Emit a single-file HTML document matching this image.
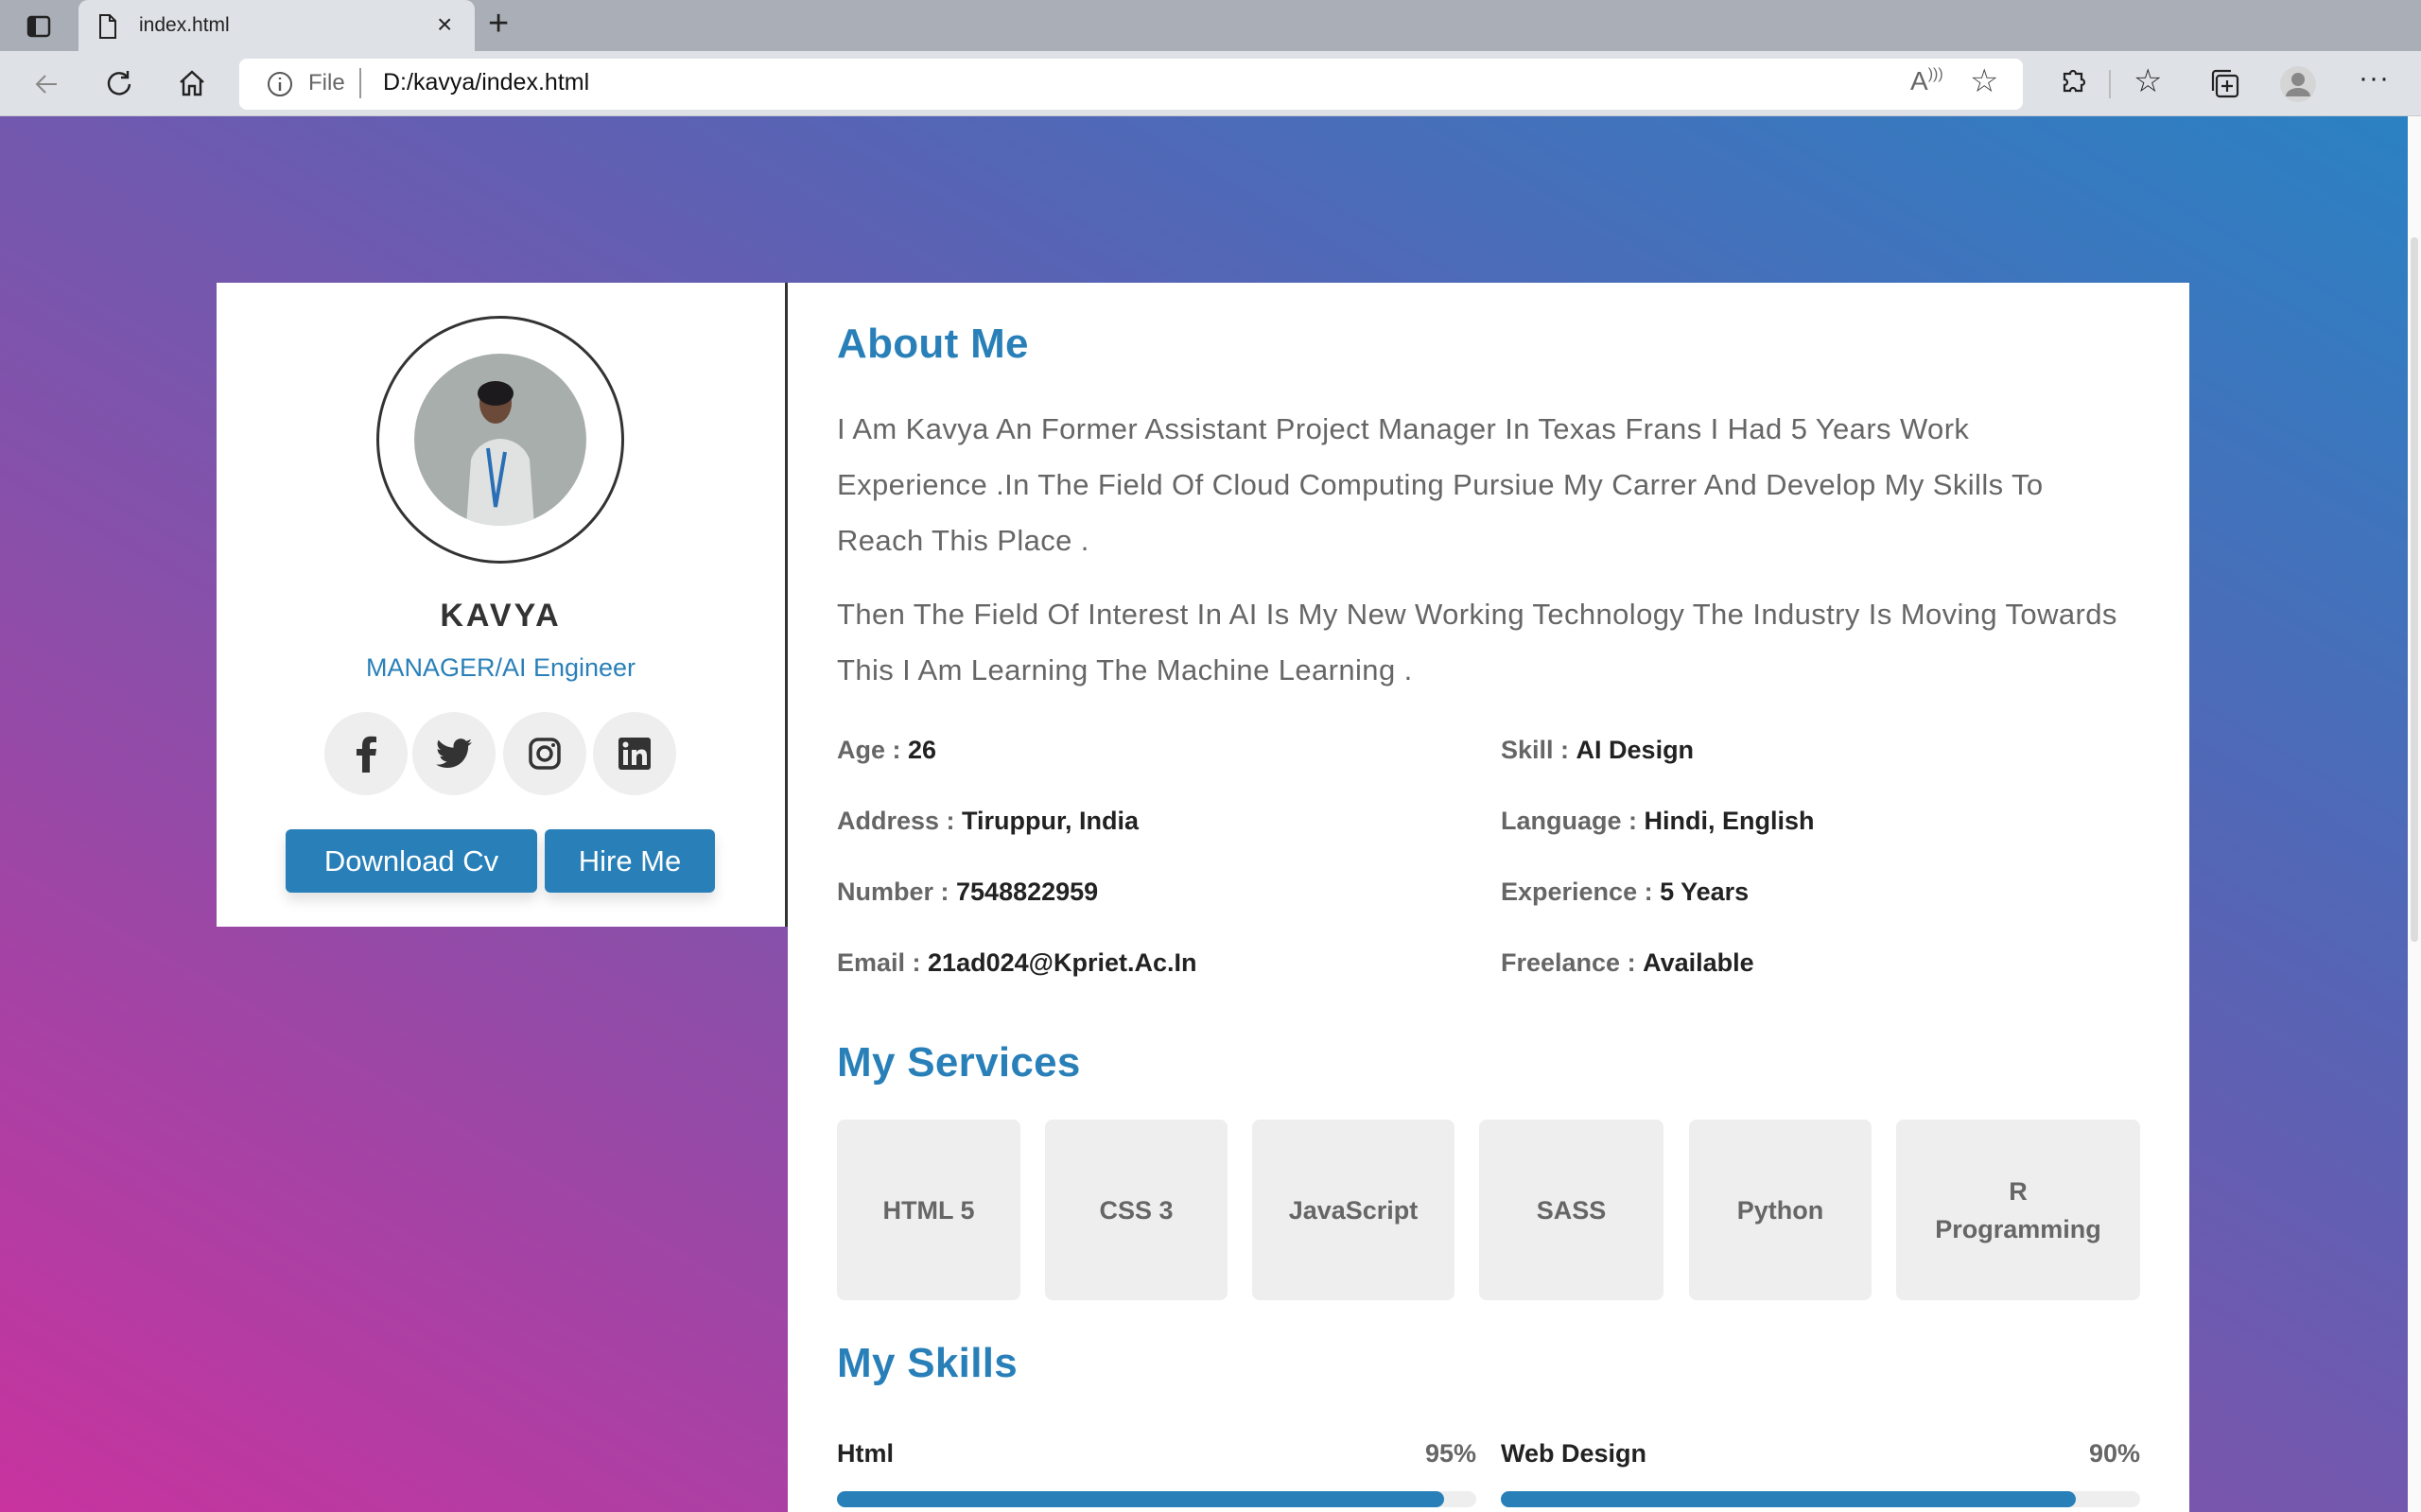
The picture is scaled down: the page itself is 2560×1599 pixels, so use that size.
<!DOCTYPE html>
<html><head><meta charset="utf-8">
<style>
*{margin:0;padding:0;box-sizing:border-box}
html,body{width:2560px;height:1599px;overflow:hidden;font-family:"Liberation Sans",sans-serif}
.tabbar{position:absolute;left:0;top:0;width:2560px;height:54px;background:#aaafb7}
.tab{position:absolute;left:83px;top:0;width:419px;height:56px;background:#dee1e6;border-radius:10px 10px 0 0}
.toolbar{position:absolute;left:0;top:54px;width:2560px;height:69px;background:#dee1e6;border-bottom:1px solid #c9ccd1}
.addr{position:absolute;left:253px;top:62px;width:1886px;height:54px;background:#fff;border-radius:8px}
.page{position:absolute;left:0;top:123px;width:2560px;height:1476px;background:linear-gradient(to top right,#c8339f 0%,#8a4fa9 35%,#5a62b4 65%,#2a82c3 100%)}
.sb{position:absolute;right:0;top:123px;width:14px;height:1476px;background:#fafafa}
.sbt{position:absolute;right:3px;top:128px;width:8px;height:745px;background:#dcdcdc;border-radius:4px}
.left{position:absolute;left:229px;top:299px;width:604px;height:681px;background:#fff;border-right:3px solid #333}
.right{position:absolute;left:833px;top:299px;width:1482px;height:1300px;background:#fff}
.t{position:absolute;white-space:nowrap}
h2{position:absolute;left:52px;font-size:44px;color:#2980b9;font-weight:bold;letter-spacing:0.3px}
.p{position:absolute;left:52px;font-size:31px;color:#666;letter-spacing:0.4px;line-height:59px;white-space:nowrap}
.info{position:absolute;font-size:27px;color:#666;white-space:nowrap;font-weight:bold}
.info b{color:#222}
.svc{position:absolute;top:885px;height:191px;background:#eee;border-radius:8px;color:#666;font-weight:bold;font-size:27px;display:flex;align-items:center;justify-content:center;text-align:center;line-height:40px}
.soc{position:absolute;top:454px;width:88px;height:88px;border-radius:50%;background:#eee;display:flex;align-items:center;justify-content:center}
.btn{position:absolute;top:578px;height:67px;background:#2980b9;color:#fff;font-size:31px;border-radius:6px;display:flex;align-items:center;justify-content:center;box-shadow:0 8px 14px rgba(0,0,0,.12)}
.bar{position:absolute;top:1278px;height:17px;width:676px;background:#eee;border-radius:9px}
.bar i{position:absolute;left:0;top:0;height:17px;background:#2980b9;border-radius:9px}
</style></head><body>
<div class="tabbar"></div>
<svg class="t" style="left:28px;top:16px" width="26" height="24" viewBox="0 0 26 24"><rect x="2" y="2" width="22" height="20" rx="3" fill="none" stroke="#222" stroke-width="2.5"/><rect x="2" y="2" width="8" height="20" fill="#222"/></svg>
<div class="tab"></div>
<svg class="t" style="left:104px;top:14px" width="20" height="28" viewBox="0 0 20 28"><path d="M2 2h10l6 6v18H2z M12 2v6h6" fill="none" stroke="#222" stroke-width="2"/></svg>
<div class="t" style="left:147px;top:15px;font-size:21px;color:#222">index.html</div>
<div class="t" style="left:462px;top:10px;font-size:28px;color:#222">×</div>
<div class="t" style="left:516px;top:4px;font-size:38px;color:#222;font-weight:300">+</div>
<div class="toolbar"></div>
<svg class="t" style="left:34px;top:74px" width="30" height="30" viewBox="0 0 30 30"><path d="M26 15H5M14 6l-9 9 9 9" fill="none" stroke="#888" stroke-width="2"/></svg>
<svg class="t" style="left:110px;top:72px" width="32" height="32" viewBox="0 0 32 32"><path d="M25 10A11 11 0 1 0 27 17M25 3v7h-7" fill="none" stroke="#222" stroke-width="2.4"/></svg>
<svg class="t" style="left:187px;top:72px" width="32" height="32" viewBox="0 0 32 32"><path d="M4 15L16 4l12 11M7 13v15h6v-9h6v9h6V13" fill="none" stroke="#222" stroke-width="2.4"/></svg>
<div class="addr"></div>
<svg class="t" style="left:281px;top:74px" width="30" height="30" viewBox="0 0 30 30"><circle cx="15" cy="15" r="12" fill="none" stroke="#555" stroke-width="2"/><path d="M15 13v9M15 8v2" stroke="#555" stroke-width="2.4"/></svg>
<div class="t" style="left:326px;top:74px;font-size:24px;color:#666">File</div>
<div class="t" style="left:380px;top:72px;width:2px;height:32px;background:#999"></div>
<div class="t" style="left:405px;top:73px;font-size:25px;color:#111">D:/kavya/index.html</div>
<div class="t" style="left:2020px;top:70px;font-size:28px;color:#666">A<span style="font-size:16px;vertical-align:top">)))</span></div>
<div class="t" style="left:2083px;top:66px;font-size:34px;color:#444">☆</div>
<svg class="t" style="left:2175px;top:70px" width="34" height="34" viewBox="0 0 34 34"><path d="M8 8h6a3 3 0 1 1 6 0h6v6a3 3 0 1 1 0 6v6h-6a3 3 0 1 0-6 0H8v-6a3 3 0 1 0 0-6z" fill="none" stroke="#222" stroke-width="2.2"/></svg>
<div class="t" style="left:2230px;top:74px;width:2px;height:30px;background:#bbb"></div>
<div class="t" style="left:2256px;top:66px;font-size:34px;color:#222">☆</div>
<svg class="t" style="left:2334px;top:70px" width="36" height="36" viewBox="0 0 36 36"><rect x="10" y="10" width="22" height="22" rx="3" fill="none" stroke="#222" stroke-width="2.2"/><path d="M6 26V8a3 3 0 0 1 3-3h16M21 15v12M15 21h12" fill="none" stroke="#222" stroke-width="2.2"/></svg>
<svg class="t" style="left:2411px;top:70px" width="38" height="38" viewBox="0 0 38 38"><circle cx="19" cy="19" r="19" fill="#d5d5d5"/><circle cx="19" cy="14" r="7" fill="#888"/><path d="M6 32a13 9 0 0 1 26 0z" fill="#888"/></svg>
<div class="t" style="left:2494px;top:66px;font-size:30px;color:#222;letter-spacing:1px">···</div>

<div class="page"></div>
<div class="sb"><div class="sbt"></div></div>

<div class="left">
<div style="position:absolute;left:169px;top:35px;width:262px;height:262px;border:3px solid #333;border-radius:50%"></div>
<svg style="position:absolute;left:209px;top:75px" width="182" height="182" viewBox="0 0 182 182">
<defs><clipPath id="c"><circle cx="91" cy="91" r="91"/></clipPath></defs>
<g clip-path="url(#c)"><rect width="182" height="182" fill="#a7aeab"/>
<path d="M55 182l5-70c5-15 20-22 31-22s26 7 31 22l5 70z" fill="#dfe2e1"/>
<ellipse cx="86" cy="52" rx="17" ry="22" fill="#6b4a3a"/><ellipse cx="86" cy="42" rx="19" ry="13" fill="#1d1a1e"/>
<path d="M78 100l8 62 10-58" fill="none" stroke="#2a6fb5" stroke-width="4"/></g></svg>
<div class="t" style="left:0;width:601px;text-align:center;top:333px;font-size:34px;font-weight:bold;color:#333;letter-spacing:3px">KAVYA</div>
<div class="t" style="left:0;width:601px;text-align:center;top:392px;font-size:27px;color:#2980b9">MANAGER/AI Engineer</div>
<div class="soc" style="left:114px"><svg width="24" height="40" viewBox="0 0 24 40"><path d="M16 40V22h6l1-7h-7v-4c0-2 1-3 3-3h4V2c-1 0-3-.3-6-.3-6 0-9 3.5-9 9.5V15H2v7h6v18z" fill="#333"/></svg></div>
<div class="soc" style="left:207px"><svg width="38" height="32" viewBox="0 0 24 20"><path d="M24 2.4a10 10 0 0 1-2.8.8A5 5 0 0 0 23.3.4a10 10 0 0 1-3.1 1.2A4.9 4.9 0 0 0 11.8 6 14 14 0 0 1 1.7.9a4.9 4.9 0 0 0 1.5 6.6A4.9 4.9 0 0 1 1 6.9a4.9 4.9 0 0 0 3.9 4.8 5 5 0 0 1-2.2.1 4.9 4.9 0 0 0 4.6 3.4A9.9 9.9 0 0 1 0 17.3 14 14 0 0 0 7.5 19.5c9.1 0 14-7.5 14-14v-.6A10 10 0 0 0 24 2.4z" fill="#333"/></svg></div>
<div class="soc" style="left:303px"><svg width="34" height="34" viewBox="0 0 34 34"><rect x="2" y="2" width="30" height="30" rx="8" fill="none" stroke="#333" stroke-width="3.5"/><circle cx="17" cy="17" r="7" fill="none" stroke="#333" stroke-width="3.5"/><circle cx="26" cy="8" r="2" fill="#333"/></svg></div>
<div class="soc" style="left:398px"><svg width="34" height="34" viewBox="0 0 34 34"><rect width="34" height="34" rx="3" fill="#333"/><rect x="5" y="13" width="5" height="16" fill="#eee"/><circle cx="7.5" cy="7.5" r="3" fill="#eee"/><path d="M14 13h5v2.5c1-2 3-3 5.5-3 4 0 5.5 2.5 5.5 7V29h-5v-8.5c0-2-.5-3.5-2.5-3.5S19 18.5 19 21v8h-5z" fill="#eee"/></svg></div>
<div class="btn" style="left:73px;width:266px">Download Cv</div>
<div class="btn" style="left:347px;width:180px">Hire Me</div>
</div>

<div class="right">
<h2 style="top:40px">About Me</h2>
<div class="p" style="top:125px">I Am Kavya An Former Assistant Project Manager In Texas Frans I Had 5 Years Work<br>Experience .In The Field Of Cloud Computing Pursiue My Carrer And Develop My Skills To<br>Reach This Place .</div>
<div class="p" style="top:321px">Then The Field Of Interest In AI Is My New Working Technology The Industry Is Moving Towards<br>This I Am Learning The Machine Learning .</div>
<div class="info" style="left:52px;top:479px">Age : <b>26</b></div>
<div class="info" style="left:52px;top:554px">Address : <b>Tiruppur, India</b></div>
<div class="info" style="left:52px;top:629px">Number : <b>7548822959</b></div>
<div class="info" style="left:52px;top:704px">Email : <b>21ad024@Kpriet.Ac.In</b></div>
<div class="info" style="left:754px;top:479px">Skill : <b>AI Design</b></div>
<div class="info" style="left:754px;top:554px">Language : <b>Hindi, English</b></div>
<div class="info" style="left:754px;top:629px">Experience : <b>5 Years</b></div>
<div class="info" style="left:754px;top:704px">Freelance : <b>Available</b></div>
<h2 style="top:800px">My Services</h2>
<div class="svc" style="left:52px;width:194px">HTML 5</div>
<div class="svc" style="left:272px;width:193px">CSS 3</div>
<div class="svc" style="left:491px;width:214px">JavaScript</div>
<div class="svc" style="left:731px;width:195px">SASS</div>
<div class="svc" style="left:953px;width:193px">Python</div>
<div class="svc" style="left:1172px;width:258px">R<br>Programming</div>
<h2 style="top:1118px">My Skills</h2>
<div class="info" style="left:52px;top:1223px;color:#222">Html</div>
<div class="info" style="left:628px;width:100px;text-align:right;top:1223px">95%</div>
<div class="info" style="left:754px;top:1223px;color:#222">Web Design</div>
<div class="info" style="left:1330px;width:100px;text-align:right;top:1223px">90%</div>
<div class="bar" style="left:52px"><i style="width:642px"></i></div>
<div class="bar" style="left:754px"><i style="width:608px"></i></div>
</div>
</body></html>
